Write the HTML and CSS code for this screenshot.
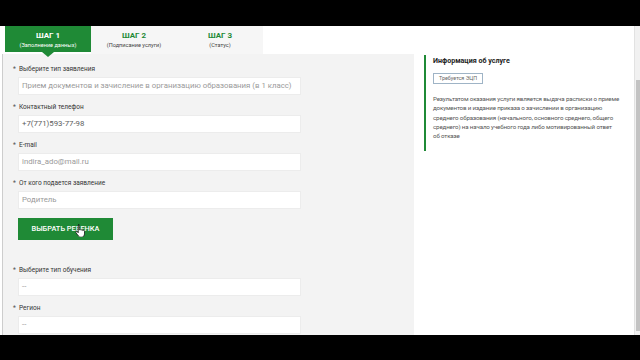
FILE: index.html
```html
<!DOCTYPE html>
<html lang="ru">
<head>
<meta charset="utf-8">
<title>Шаг 1</title>
<link rel="stylesheet" href="styles.css">
</head>
<body>
<div class="screen">
  <div class="bar"></div>
  <div class="app">
    <div class="left">
      <div class="tabs">
        <div class="tab active">
          <div class="tab-title">ШАГ 1</div>
          <div class="tab-sub">(Заполнение данных)</div>
        </div>
        <div class="tab">
          <div class="tab-title">ШАГ 2</div>
          <div class="tab-sub">(Подписание услуги)</div>
        </div>
        <div class="tab">
          <div class="tab-title">ШАГ 3</div>
          <div class="tab-sub">(Статус)</div>
        </div>
      </div>
      <div class="form">
        <div class="field">
          <div class="label"><span class="req">*</span>Выберите тип заявления</div>
          <div class="input muted">Прием документов и зачисление в организацию образования (в 1 класс)</div>
        </div>
        <div class="field">
          <div class="label"><span class="req">*</span>Контактный телефон</div>
          <div class="input">+7(771)593-77-98</div>
        </div>
        <div class="field">
          <div class="label"><span class="req">*</span>E-mail</div>
          <div class="input muted">indira_ado@mail.ru</div>
        </div>
        <div class="field">
          <div class="label"><span class="req">*</span>От кого подается заявление</div>
          <div class="input muted">Родитель</div>
        </div>
        <div class="btn-wrap">
          <div class="btn">ВЫБРАТЬ РЕБЕНКА</div>
          <svg class="cursor" width="11" height="13" viewBox="0 0 11 13">
            <path d="M3.2 0.8c0.6 0 1 0.4 1 1v4.2c0.2-0.3 0.5-0.4 0.9-0.4 0.5 0 0.8 0.3 0.9 0.6 0.2-0.3 0.5-0.4 0.9-0.4 0.5 0 0.9 0.4 0.9 0.8 0.2-0.2 0.4-0.3 0.7-0.3 0.6 0 1 0.4 1 1v2.6c0 1.7-1.2 3.3-3.2 3.3H5.8c-1.1 0-1.8-0.5-2.4-1.3L1 8.8C0.7 8.3 0.8 7.8 1.2 7.5c0.4-0.3 0.9-0.2 1.2 0.2l0.8 1V1.8c0-0.6 0.4-1 1-1z" fill="#fff" stroke="#111" stroke-width="0.8"/>
          </svg>
        </div>
        <div class="field gap">
          <div class="label"><span class="req">*</span>Выберите тип обучения</div>
          <div class="input muted">--</div>
        </div>
        <div class="field">
          <div class="label"><span class="req">*</span>Регион</div>
          <div class="input muted">--</div>
        </div>
      </div>
    </div>
    <div class="right">
      <div class="info">
        <div class="info-title">Информация об услуге</div>
        <div class="badge">Требуется ЭЦП</div>
        <p class="info-text">Результатом оказания услуги является выдача расписки о приеме документов и издание приказа о зачислении в организацию среднего образования (начального, основного среднего, общего среднего) на начало учебного года либо мотивированный ответ<br>об отказе</p>
      </div>
    </div>
    <div class="scroll"><div class="thumb"></div></div>
  </div>
  <div class="bar"></div>
</div>
</body>
</html>
```

FILE: styles.css
```css
* { box-sizing: border-box; }
html, body { margin: 0; padding: 0; background: #000; }
body { font-family: Roboto, "Open Sans", "Noto Sans", sans-serif; color: #333; }

.screen { width: 640px; height: 360px; display: flex; flex-direction: column; overflow: hidden; }
.bar { height: 26px; background: #000; flex: none; }
.app { height: 309px; flex: none; background: #fff; display: flex; overflow: hidden; }

.left { width: 412px; margin-left: 2px; display: flex; flex-direction: column; flex: none; }
.tabs { height: 28px; display: flex; margin-left: 3px; flex: none; }
.tab { width: 86px; background: #f6f6f6; text-align: center; padding-top: 5px; position: relative; }
.tab-title { font-size: 8px; font-weight: 700; color: #1f8a36; line-height: 10px; }
.tab-sub { font-size: 5.6px; color: #444; line-height: 8px; }
.tab.active { background: #1f8a36; height: 26px; }
.tab.active .tab-title, .tab.active .tab-sub { color: #fff; }
.tab.active::after { content: ""; position: absolute; left: 50%; bottom: -5px; margin-left: -6px; border-left: 6px solid transparent; border-right: 6px solid transparent; border-top: 5px solid #1f8a36; }

.form { flex: 1; background: #f3f3f3; border-left: 1px solid #cdcdcd; padding: 10px 0 0 10px; }
.field { margin-bottom: 7px; }
.field.gap { margin-top: 25px; }
.label { font-size: 6.5px; line-height: 10px; height: 10px; color: #333; margin-bottom: 3px; white-space: nowrap; }
.req { display: inline-block; width: 6px; color: #555; }
.input { margin-left: 5px; width: 283px; height: 18px; background: #fff; border: 1px solid #ececec; font-size: 7.8px; line-height: 16px; padding-left: 3px; color: #5c5c5c; white-space: nowrap; overflow: hidden; }
.input.muted { color: #9a9a9a; }

.btn-wrap { position: relative; margin: 9px 0 0 5px; width: 95px; }
.btn { height: 22px; background: #1f8a36; color: #fff; font-size: 7.4px; font-weight: 500; line-height: 22px; text-align: center; }
.cursor { position: absolute; left: 57px; top: 6px; }

.right { flex: 1; padding-top: 29px; }
.info { margin-left: 10px; border-left: 2px solid #1f8a36; padding: 1px 0 0 7px; height: 96px; }
.info-title { font-size: 7.1px; font-weight: 700; color: #222; line-height: 9px; }
.badge { display: inline-block; margin-top: 7px; height: 11px; padding: 0 5px; border: 1px solid #9fb4c6; font-size: 5.4px; line-height: 9px; color: #666; }
.info-text { margin: 11px 0 0; font-size: 6.2px; letter-spacing: -0.15px; line-height: 9.3px; color: #555; width: 191px; }

.scroll { width: 6px; flex: none; background: #f1f1f1; border-left: 1px solid #e2e2e2; position: relative; }
.thumb { position: absolute; left: 1px; right: 0; top: 54px; bottom: 4px; background: #c3c3c3; }
```
